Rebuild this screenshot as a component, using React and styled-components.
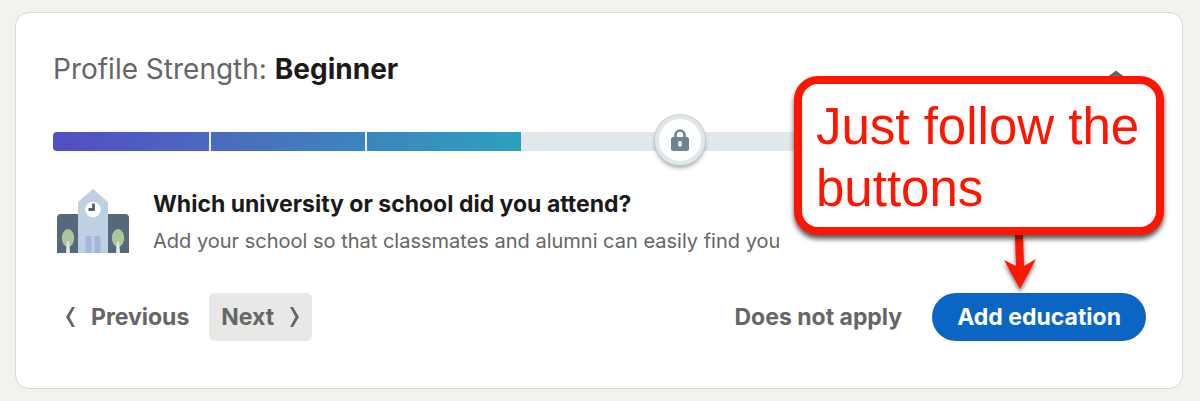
import React from 'react'
import styled, { createGlobalStyle } from 'styled-components'

const GlobalStyle = createGlobalStyle`
    * {
        box-sizing: border-box;
    }

    body {
        margin: 0;
        background: #f3f3ee;
        font-family: Inter, "Liberation Sans", sans-serif;
    }
`

const Page = styled.main`
    padding: 12px 17px 12px 15px;
`

const Card = styled.section`
    position: relative;
    padding: 36px 36px 47px 37px;
    background: #ffffff;
    border: 1px solid #d8d8d4;
    border-radius: 14px;
`

const Header = styled.header`
    display: flex;
    align-items: center;
    justify-content: space-between;
    height: 40px;
    margin-bottom: 43px;
`

const Title = styled.h2`
    margin: 0;
    font-size: 28px;
    line-height: 40px;
    font-weight: 400;
    color: #666666;

    strong {
        font-weight: 700;
        color: #1a1a1a;
    }
`

const CollapseButton = styled.button`
    display: flex;
    padding: 0;
    margin: 14px 16px 0 0;
    border: none;
    background: none;
    color: #666666;
    cursor: pointer;
`

const TrackWrap = styled.div`
    position: relative;
    margin-bottom: 35px;
`

const Track = styled.div`
    display: grid;
    grid-template-columns: repeat(7, 1fr);
    height: 19px;
    border-radius: 4px;
    overflow: hidden;
    background: linear-gradient(90deg, #544dc4 0, #4872be 19%, #2e9fbc 42%);
`

const Segment = styled.div`
    background: ${(props) => (props.$done ? 'transparent' : '#e1e8eb')};
    border-left: ${(props) => (props.$done ? '2px solid #e9f0f6' : 'none')};

    &:first-child {
        border-left: none;
    }
`

const LockBadge = styled.div`
    position: absolute;
    top: -17px;
    left: calc(100% * 4 / 7 - 23px);
    display: flex;
    align-items: center;
    justify-content: center;
    width: 50px;
    height: 50px;
    border: 4px solid #e1e8eb;
    border-radius: 50%;
    background: #ffffff;
    box-shadow: 0 0 0 1px #c9cccd, 0 3px 4px rgba(0, 0, 0, 0.35);
`

const Question = styled.div`
    display: flex;
    align-items: flex-start;
    gap: 24px;
    margin-bottom: 33px;
    padding-left: 4px;
`

const QuestionTitle = styled.h3`
    margin: 0;
    font-size: 23px;
    line-height: 36px;
    font-weight: 700;
    color: #1a1a1a;
`

const QuestionHint = styled.p`
    margin: 0;
    font-size: 20px;
    line-height: 38px;
    color: #666666;
`

const Actions = styled.footer`
    display: flex;
    justify-content: space-between;
`

const ActionGroup = styled.div`
    display: flex;
    gap: ${(props) => props.$gap}px;
`

const Button = styled.button`
    display: flex;
    align-items: center;
    gap: 14px;
    height: 48px;
    padding: 0 12px;
    border: none;
    border-radius: 6px;
    background: ${(props) => (props.$active ? '#e8e8e7' : 'transparent')};
    color: #666666;
    font-family: inherit;
    font-size: 23px;
    font-weight: 700;
    cursor: pointer;
`

const PrimaryButton = styled(Button)`
    padding: 0 25px;
    border-radius: 24px;
    background: #0a66c2;
    color: #ffffff;
`

const Callout = styled.aside`
    position: absolute;
    top: 63px;
    right: 18px;
    width: 370px;
    padding: 12px 14px 7px;
    border: 8px solid #ff1500;
    border-radius: 24px;
    background: #ffffff;
    box-shadow: 0 4px 5px rgba(0, 0, 0, 0.65);
    color: #ff1500;
    font-family: "Liberation Sans", sans-serif;
    font-size: 51px;
    line-height: 62px;
`

const CalloutArrow = styled.svg`
    position: absolute;
    top: 222px;
    right: 140px;
    filter: drop-shadow(0 3px 2px rgba(0, 0, 0, 0.55));
`

function Chevron({ flip }) {
    return (
        <svg width="12" height="22" viewBox="0 0 12 22" aria-hidden="true">
            <path
                d={flip ? 'M2 1H5L11 11L5 21H2L7.5 11Z' : 'M10 1H7L1 11L7 21H10L4.5 11Z'}
                fill="currentColor"
            />
        </svg>
    )
}

function SchoolIcon() {
    return (
        <svg width="72" height="67" viewBox="0 -3 72 67" aria-hidden="true">
            <path d="M0 64V29Q0 25 4 25H68Q72 25 72 29V64Z" fill="#56697a" />
            <path d="M21 64V13L36 0L51 13V64Z" fill="#bfd0e2" />
            <circle cx="36" cy="20.5" r="7.8" fill="#ffffff" />
            <path d="M36.5 14.5V20.5H31.5" fill="none" stroke="#4b6070" strokeWidth="2.8" />
            <path d="M28.5 64V49Q28.500 47 30.5 47H34.5V64Z" fill="#a8b5da" />
            <path d="M37.5 64V47H41.5Q43.5 47 43.5 49V64Z" fill="#a8b5da" />
            <ellipse cx="11" cy="49" rx="6.2" ry="9" fill="#adc59b" />
            <ellipse cx="61" cy="49" rx="6.2" ry="9" fill="#adc59b" />
            <path d="M9.5 64L10.3 53H11.7L12.5 64Z" fill="#e2e8e8" stroke="#e2e8e8" />
            <path d="M59.5 64L60.3 53H61.7L62.5 64Z" fill="#e2e8e8" stroke="#e2e8e8" />
        </svg>
    )
}

function LockIcon() {
    return (
        <svg width="18" height="22" viewBox="0 0 18 22" aria-hidden="true">
            <path d="M4.5 9V6A4.5 4.5 0 0 1 13.5 6V9" fill="none" stroke="#70828f" strokeWidth="2.6" />
            <rect y="8" width="18" height="14" rx="2.5" fill="#70828f" />
            <rect x="7.3" y="12" width="3.4" height="5.5" rx="1" fill="#ffffff" />
        </svg>
    )
}

const steps = [true, true, true, false, false, false, false]

function App() {
    return (
        <Page>
            <GlobalStyle />
            <Card>
                <Header>
                    <Title>
                        Profile Strength: <strong>Beginner</strong>
                    </Title>
                    <CollapseButton type="button" aria-label="Collapse">
                        <svg width="28" height="14" viewBox="0 0 28 14" aria-hidden="true">
                            <path d="M2 13L14 4L26 13" fill="none" stroke="currentColor" strokeWidth="4" />
                        </svg>
                    </CollapseButton>
                </Header>
                <TrackWrap>
                    <Track>
                        {steps.map((done, i) => (
                            <Segment key={i} $done={done} />
                        ))}
                    </Track>
                    <LockBadge>
                        <LockIcon />
                    </LockBadge>
                </TrackWrap>
                <Question>
                    <SchoolIcon />
                    <div>
                        <QuestionTitle>Which university or school did you attend?</QuestionTitle>
                        <QuestionHint>Add your school so that classmates and alumni can easily find you</QuestionHint>
                    </div>
                </Question>
                <Actions>
                    <ActionGroup $gap={8}>
                        <Button type="button">
                            <Chevron />
                            Previous
                        </Button>
                        <Button type="button" $active>
                            Next
                            <Chevron flip />
                        </Button>
                    </ActionGroup>
                    <ActionGroup $gap={18}>
                        <Button type="button">Does not apply</Button>
                        <PrimaryButton type="button">Add education</PrimaryButton>
                    </ActionGroup>
                </Actions>
                {/* the arrow goes first so the callout covers the top of its shaft */}
                <CalloutArrow width="44" height="58" viewBox="0 0 44 58" aria-hidden="true">
                    <path d="M17 0H25L26 31L38 24L22 54L6 25L18 31Z" fill="#ff1500" />
                </CalloutArrow>
                <Callout>Just follow the buttons</Callout>
            </Card>
        </Page>
    )
}

export default App
